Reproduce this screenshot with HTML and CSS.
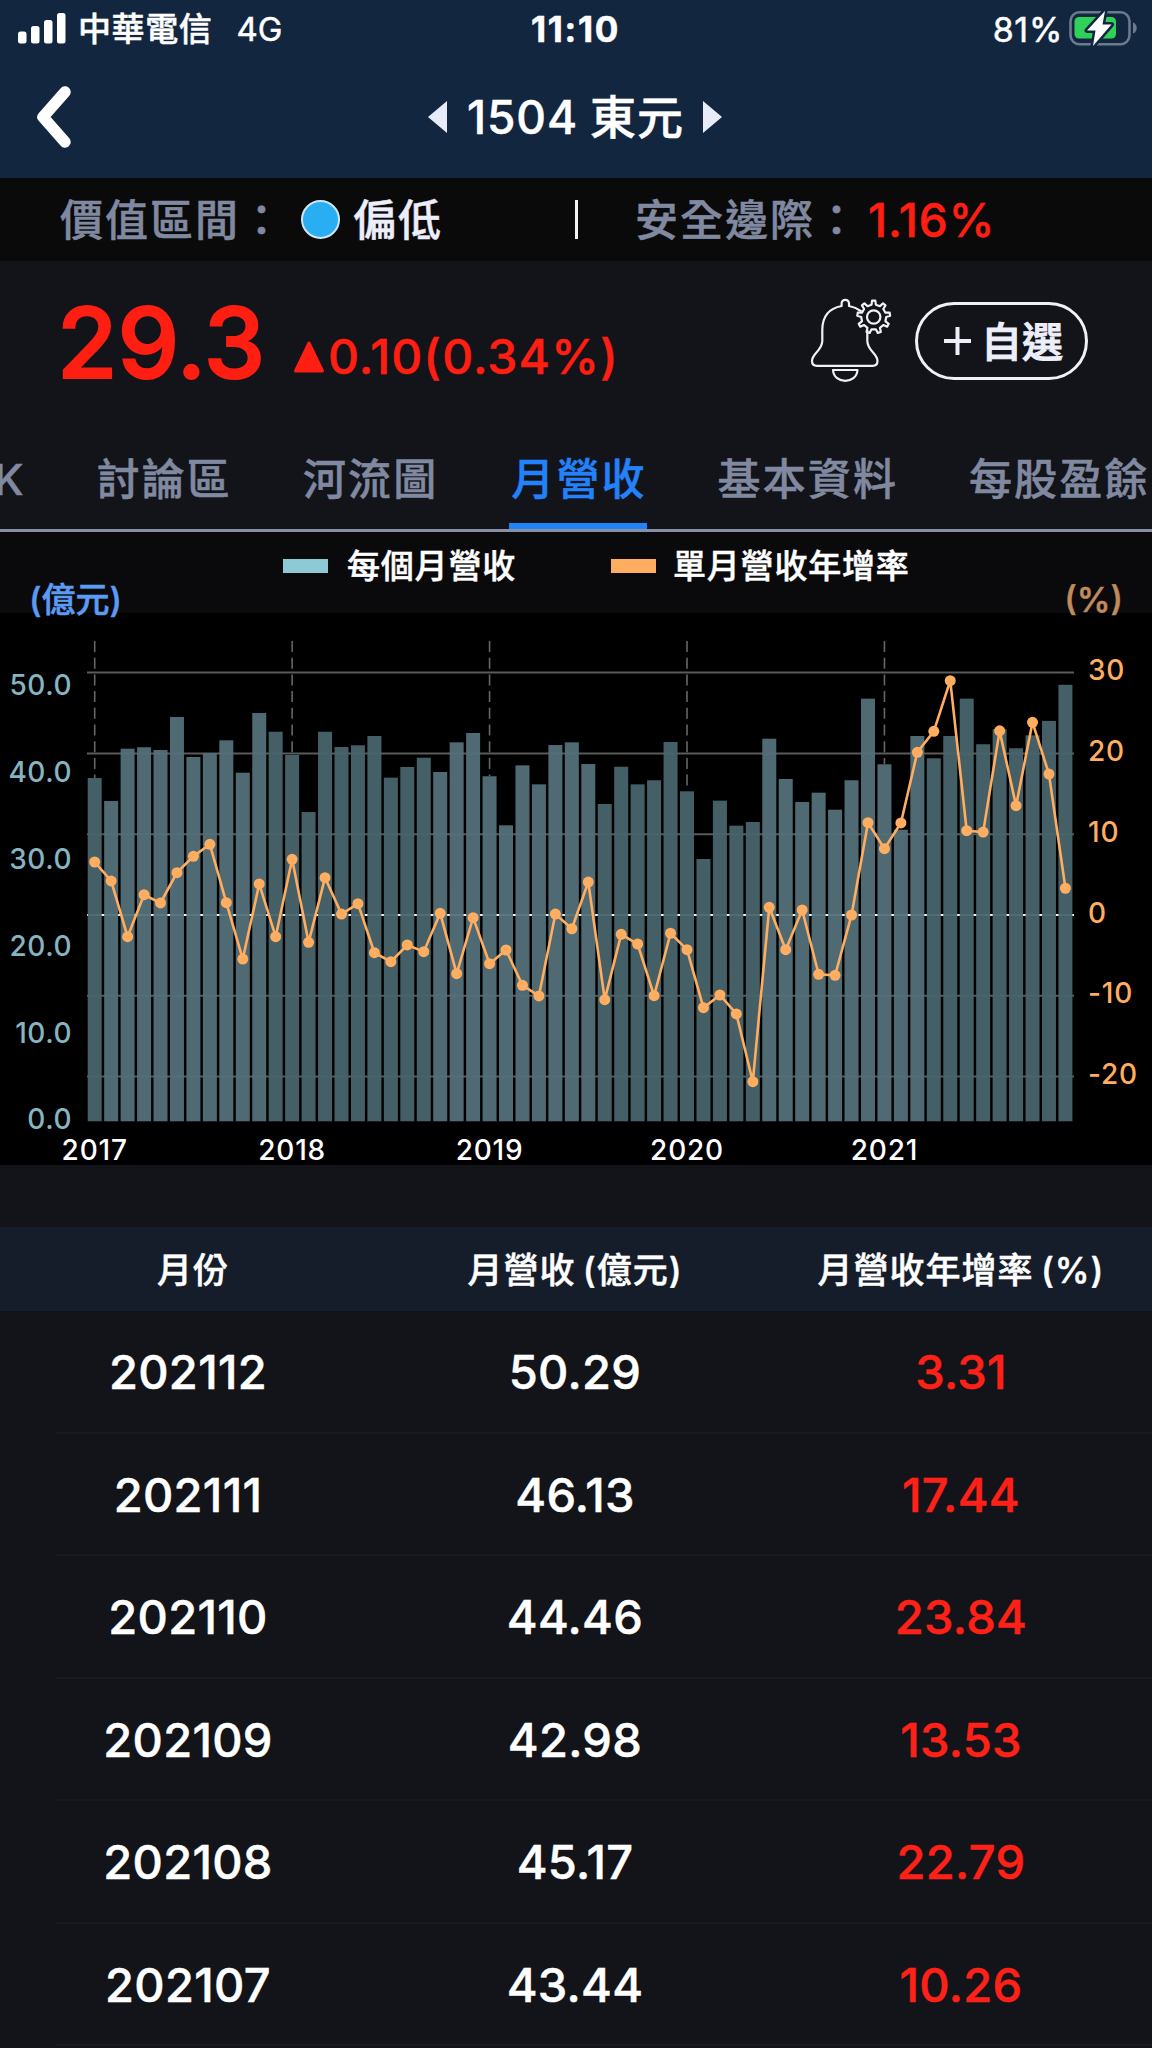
FILE: index.html
```html
<!DOCTYPE html>
<html lang="zh-Hant">
<head>
  <meta charset="UTF-8" />
  <meta name="viewport" content="width=device-width, initial-scale=1" />
  <title>1504 東元</title>
  <link rel="stylesheet" href="styles.css">
</head>
<body>
  <header class="header">
    <div class="status">
      <div class="carrier">
        <svg class="signal" width="48" height="31" viewBox="0 0 48 31" fill="#fff">
          <rect x="0" y="18.500" width="8.500" height="12" rx="2.500" />
          <rect x="13" y="13" width="8.500" height="17.500" rx="2.500" />
          <rect x="26" y="7" width="8.500" height="23.500" rx="2.500" />
          <rect x="39" y="0" width="8.500" height="30.500" rx="2.500" />
        </svg>
        <span class="operator">中華電信</span>
        <span class="network">4G</span>
      </div>
      <div class="clock">11:10</div>
      <div class="power">
        <span>81%</span>
        <svg width="70" height="36" viewBox="0 0 70 36">
          <rect x="1.500" y="2.200" width="59" height="32" rx="9" fill="none" stroke="#6b7a8d" stroke-width="2.600" />
          <path d="M64 12.500c5 1.500 5 9.500 0 11z" fill="#6b7a8d" />
          <rect x="5.500" y="7" width="41.500" height="21.500" rx="4.500" fill="#30d158" />
          <path d="M36 1L18 20.500h8.500L24 36L42.500 14.500h-9z" fill="#fff" stroke="#12263f" stroke-width="5" stroke-linejoin="round" paint-order="stroke" />
        </svg>
      </div>
    </div>
    <nav class="navbar">
      <svg class="back" width="36" height="64" viewBox="0 0 36 64">
        <path d="M29 7L7 32L29 57" fill="none" stroke="#fff" stroke-width="11.500" stroke-linecap="round" stroke-linejoin="round" />
      </svg>
      <div class="stock">
        <svg width="19" height="32" viewBox="0 0 19 32"><path d="M19 0v32L0 16z" fill="#e8ebf8" /></svg>
        <h1><span class="code">1504</span><span>東元</span></h1>
        <svg width="19" height="32" viewBox="0 0 19 32"><path d="M0 0v32L19 16z" fill="#e8ebf8" /></svg>
      </div>
    </nav>
  </header>

  <section class="valuation">
    <span class="label">價值區間：</span>
    <i class="dot"></i>
    <span class="zone">偏低</span>
    <i class="divider"></i>
    <span class="label">安全邊際：</span>
    <span class="margin-rate">1.16%</span>
  </section>

  <section class="quote">
    <span class="price">29.3</span>
    <svg class="up" width="32" height="34" viewBox="0 0 32 34"><path d="M16 3L29.500 31h-27z" fill="#ff1e12" stroke="#ff1e12" stroke-width="3" stroke-linejoin="round" /></svg>
    <span class="change">0.10(0.34%)</span>
    <svg class="bell" width="84" height="84" viewBox="0 0 84 84" fill="none" stroke="#f0f1f8" stroke-width="2.200" stroke-linejoin="round">
      <path d="M53.500 13.500C48 9.500 44 8.500 41 8V5.500a3.700 3.700 0 0 0-7.400 0V8C20 10.500 14.500 20 14.300 31.500V43C14 53 4 55 4 63c0 3.500 2.500 4.800 5 4.800h55.500c3 0 5-1.700 5-4.800C69.500 55 59.500 53 59.300 43V32" />
      <path d="M25 72h24.500c-1 14.500-23.500 14.500-24.500 0z" />
      <path id="gear" />
      <circle cx="65.700" cy="19" r="6.700" />
    </svg>
    <button class="watch">
      <svg width="27" height="28" viewBox="0 0 27 28"><path d="M13.500 0v28M0 14h27" stroke="#eceefa" stroke-width="4" /></svg>
      <span>自選</span>
    </button>
  </section>

  <nav class="tabs">
    <a class="tab">K</a>
    <a class="tab">討論區</a>
    <a class="tab">河流圖</a>
    <a class="tab active">月營收</a>
    <a class="tab">基本資料</a>
    <a class="tab">每股盈餘</a>
  </nav>

  <section class="legend">
    <div class="series">
      <i class="swatch revenue"></i><span class="name-revenue">每個月營收</span>
      <i class="swatch growth"></i><span>單月營收年增率</span>
    </div>
    <div class="units">
      <span class="unit-left">(億元)</span>
      <span class="unit-right">(%)</span>
    </div>
  </section>

  <svg class="chart" id="chart" width="1152" height="552" viewBox="0 613 1152 552"></svg>

  <section class="table">
    <div class="row head"><span class="month">月份</span><span>月營收 (億元)</span><span>月營收年增率 (%)</span></div>
    <div class="row"><span>202112</span><span>50.29</span><span class="rise">3.31</span></div>
    <div class="row"><span>202111</span><span>46.13</span><span class="rise">17.44</span></div>
    <div class="row"><span>202110</span><span>44.46</span><span class="rise">23.84</span></div>
    <div class="row"><span>202109</span><span>42.98</span><span class="rise">13.53</span></div>
    <div class="row"><span>202108</span><span>45.17</span><span class="rise">22.79</span></div>
    <div class="row"><span>202107</span><span>43.44</span><span class="rise">10.26</span></div>
  </section>

  <script src="chart.js"></script>
</body>
</html>
```
FILE: styles.css
```css
* {
  box-sizing: border-box;
}

body {
  margin: 0;
  width: 1152px;
  height: 2048px;
  overflow: hidden;
  background: #121419;
  color: #fff;
  font-family: Inter, "Noto Sans CJK TC", sans-serif;
  font-weight: 500;
  -webkit-text-stroke: 0.5px;
}

svg {
  display: block;
  flex: none;
}

span,
a {
  white-space: nowrap;
}

/* header */
.header {
  height: 178px;
  background: #12263f;
}

.status {
  display: grid;
  grid-template-columns: 1fr auto 1fr;
  height: 58px;
  padding: 0 18px;
  font-size: 33px;
  line-height: 59px;
}

.carrier,
.power {
  display: flex;
  align-items: center;
}

.signal {
  margin-top: -2px;
}

.operator {
  margin-left: 12px;
  letter-spacing: 0.6px;
}

.network {
  margin-left: 24px;
  font-weight: 400;
}

.clock {
  width: 90px;
  font-size: 35px;
  font-weight: 700;
  letter-spacing: 1.7px;
}

.power {
  justify-content: flex-end;
  gap: 6px;
  font-size: 34px;
  font-weight: 400;
  letter-spacing: 0.7px;
}

.power svg {
  margin-right: -5px;
  margin-top: -3px;
}

.navbar {
  display: flex;
  align-items: center;
  height: 120px;
  padding-left: 36px;
}

.back {
  margin-top: -2px;
}

.stock {
  display: flex;
  align-items: center;
  gap: 20px;
  margin-left: 356px;
  margin-top: -2px;
}

h1 {
  display: flex;
  gap: 12px;
  width: 216px;
  margin: 0;
  font-size: 46px;
  font-weight: 500;
  letter-spacing: 0.9px;
  line-height: 62px;
  white-space: nowrap;
}

/* valuation bar */
.valuation {
  display: flex;
  align-items: center;
  height: 83px;
  padding-left: 60px;
  background: #0a0a0b;
  font-size: 43px;
  line-height: 86px;
}

.label {
  width: 241px;
  color: #8089a0;
  letter-spacing: 2px;
}

.dot {
  width: 39px;
  height: 39px;
  border: 2px solid #cfe6f5;
  border-radius: 50%;
  background: #29aef3;
}

.zone {
  width: 222px;
  margin-left: 13px;
  color: #eceefa;
  letter-spacing: 2px;
}

.divider {
  width: 3px;
  height: 39px;
  margin-right: 57px;
  background: #f4f4f8;
}

.margin-rate {
  margin-left: -8px;
  color: #ff1e12;
  font-size: 46px;
  letter-spacing: 0.9px;
}

/* quote */
.quote {
  display: flex;
  height: 162px;
  padding: 37px 0 0 57px;
  color: #ff1e12;
}

.price {
  width: 236px;
  font-size: 98px;
  line-height: 90px;
  -webkit-text-stroke: 2.2px;
}

.up {
  margin-top: 42px;
}

.change {
  width: 480px;
  margin: 29px 0 0 3px;
  font-size: 48px;
  letter-spacing: 1.1px;
  line-height: 60px;
}

.watch {
  display: flex;
  align-items: center;
  gap: 11px;
  width: 173px;
  height: 78px;
  margin: 4px 0 0 23px;
  padding: 0 0 0 26px;
  border: 3px solid #f0f1f8;
  border-radius: 39px;
  background: none;
  color: #eceefa;
  font: inherit;
  font-size: 41px;
  -webkit-text-stroke: 1px;
}

.watch span {
  margin-top: -4px;
  margin-left: -1px;
}

/* tabs */
.tabs {
  display: flex;
  gap: 71px;
  height: 109px;
  margin-left: -6px;
  border-bottom: 3px solid #8790a4;
}

.tab {
  height: 106px;
  color: #8089a0;
  font-size: 43px;
  line-height: 112px;
  letter-spacing: 2.1px;
}

.active {
  padding-left: 2px;
  border-bottom: 6px solid #2382fa;
  color: #2382fa;
}

/* chart */
.legend {
  height: 81px;
  background: #0a0a0c;
}

.series {
  display: flex;
  align-items: center;
  height: 48px;
  padding: 19px 0 0 283px;
  font-size: 33px;
  line-height: 30px;
  letter-spacing: 0.8px;
}

.swatch {
  width: 45px;
  height: 14px;
  margin-right: 19px;
}

.revenue {
  background: #8ec9d6;
}

.growth {
  background: #ffad60;
}

.name-revenue {
  width: 264px;
}

.growth + span {
  margin-left: -2px;
}

.units {
  display: flex;
  justify-content: space-between;
  position: relative;
  height: 33px;
  padding: 0 29px 0 29px;
  font-size: 34px;
  line-height: 39px;
}

.unit-left {
  color: #5c9bf2;
}

.unit-right {
  color: #c28b5c;
}

.chart {
  overflow: visible;
  background: #000;
  font-size: 28px;
  letter-spacing: 0.8px;
  -webkit-text-stroke: 0.3px;
}

.grid {
  stroke: #5a5a5a;
  stroke-width: 2;
}

.zero {
  stroke: #f2f2f2;
}

.year-line {
  stroke: #666;
  stroke-width: 1.6;
  stroke-dasharray: 11 5.7;
}

.bar {
  fill: #547079;
  fill-opacity: 0.95;
}

.bar-dark {
  fill: #49646c;
}

.growth-line {
  fill: none;
  stroke: #ffad60;
  stroke-width: 2.6;
}

.point {
  fill: #ffad60;
}

.left-label {
  fill: #86b4c0;
  text-anchor: end;
  letter-spacing: 0.5px;
}

.right-label {
  fill: #ffad60;
}

.year-label {
  fill: #fff;
  text-anchor: middle;
}

/* monthly table */
.table {
  margin-top: 62px;
}

.row {
  display: grid;
  grid-template-columns: 376px 398px 374px;
  height: 122.5px;
  font-size: 47px;
  line-height: 122px;
  letter-spacing: 0.3px;
  text-align: center;
  background: linear-gradient(#181a1e, #181a1e) 56px 100% / 100% 2px no-repeat;
}

.head {
  height: 84px;
  background: #151d2b;
  font-size: 35px;
  line-height: 86px;
  letter-spacing: 1px;
  word-spacing: -3px;
}

.month {
  padding-left: 10px;
}

.rise {
  color: #ff2118;
}
```
FILE: chart.js
```javascript
// monthly revenue and year-over-year growth, 2017/01 - 2021/12
const revenue = [
  39.55, 36.9, 42.93, 43.09, 42.78, 46.58, 41.97, 42.43, 43.89, 40.16, 47.04, 44.88,
  42.2, 35.63, 44.88, 43.12, 43.32, 44.39, 39.59, 40.82, 41.89, 40.24, 43.66, 44.74,
  39.75, 34.1, 41.01, 38.82, 43.35, 43.66, 41.16, 36.56, 40.85, 38.82, 39.29, 43.7,
  38.02, 30.22, 36.94, 34.06, 34.48, 44.08, 39.44, 36.79, 37.86, 35.9, 39.29, 48.69,
  41.13, 33.59, 44.39, 41.82, 44.39, 48.69, 43.44, 45.17, 42.98, 44.46, 46.13, 50.29
];
const growth = [
  6.56, 4.21, -2.69, 2.51, 1.49, 5.24, 7.26, 8.75, 1.52, -5.45, 3.84, -2.69,
  6.89, -3.38, 4.62, 0.12, 1.4, -4.67, -5.78, -3.71, -4.54, 0.21, -7.26, -0.33,
  -6.03, -4.33, -8.7, -10.02, 0.12, -1.7, 4.08, -10.48, -2.39, -3.59, -9.99, -2.26,
  -4.29, -11.47, -9.9, -12.25, -20.63, 0.95, -4.29, 0.62, -7.34, -7.46, 0, 11.42,
  8.21, 11.39, 20.14, 22.73, 29, 10.43, 10.26, 22.79, 13.53, 23.84, 17.44, 3.31
];

const x = i => 94.7 + i * 16.453;
const yRev = v => 1121.3 - v * 8.68;
const yGrow = v => 915 - v * 8.08;

let svg = '';

for (let i = 0; i < 60; i += 12) {
  // year lines stop at the top of their bar
  svg += `<line class="year-line" x1="${x(i)}" x2="${x(i)}" y1="641" y2="${yRev(revenue[i])}" />`;
  svg += `<text class="year-label" x="${x(i)}" y="1160">${2017 + i / 12}</text>`;
}

for (let v = 30; v >= -20; v -= 10) {
  svg += `<line class="grid${v === 0 ? ' zero' : ''}" x1="87" x2="1074" y1="${yGrow(v)}" y2="${yGrow(v)}" />`;
  svg += `<text class="right-label" x="1088" y="${yGrow(v) + 7.5}">${v}</text>`;
}

for (let v = 50; v >= 0; v -= 10) {
  svg += `<text class="left-label" x="72" y="${yRev(v) + 8}">${v.toFixed(1)}</text>`;
}

revenue.forEach((v, i) => {
  const dark = Math.floor((i + 9) / 10) % 2 === 0;
  svg += `<rect class="bar${dark ? ' bar-dark' : ''}" x="${x(i) - 7}" y="${yRev(v)}" width="14" height="${v * 8.68}" />`;
});

svg += `<polyline class="growth-line" points="${growth.map((v, i) => x(i) + ',' + yGrow(v)).join(' ')}" />`;
growth.forEach((v, i) => {
  svg += `<circle class="point" cx="${x(i)}" cy="${yGrow(v)}" r="5.500" />`;
});

document.getElementById('chart').innerHTML = svg;

// nine-tooth gear on the alert bell
const teeth = 9;
const pts = [];
for (let i = 0; i < teeth; i++) {
  [[-0.25, 12.5], [-0.14, 16.5], [0.14, 16.5], [0.25, 12.5]].forEach(([t, r]) => {
    const a = (i + t) / teeth * Math.PI * 2 - Math.PI / 2;
    pts.push((65.7 + r * Math.cos(a)).toFixed(2) + ' ' + (19 + r * Math.sin(a)).toFixed(2));
  });
}
document.getElementById('gear').setAttribute('d', 'M' + pts.join('L') + 'z');
```
